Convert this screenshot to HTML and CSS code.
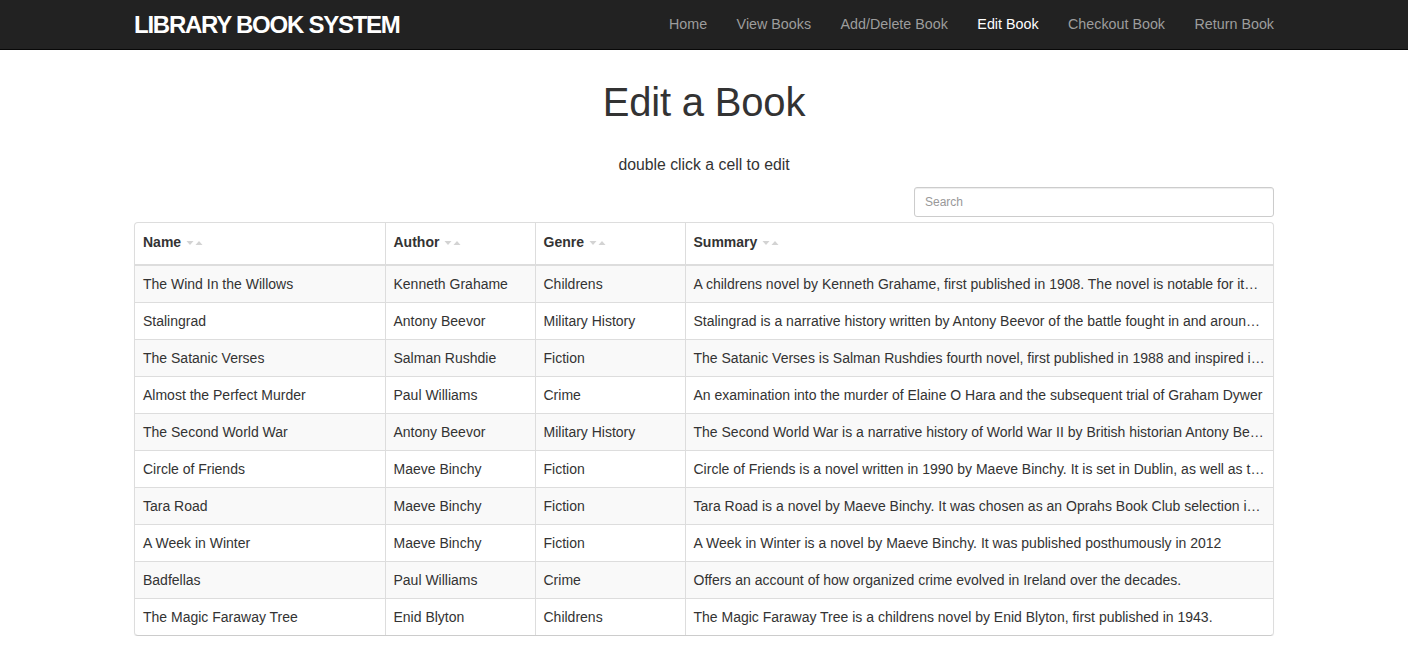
FILE: index.html
```html
<!DOCTYPE html>
<html lang="en">
<head>
<meta charset="utf-8">
<title>Edit a Book</title>
<link rel="stylesheet" href="styles.css">
</head>
<body>
<nav class="navbar">
  <div class="container nav-inner">
    <a class="brand" href="#">LIBRARY BOOK SYSTEM</a>
    <ul class="nav-links">
      <li><a href="#">Home</a></li>
      <li><a href="#">View Books</a></li>
      <li><a href="#">Add/Delete Book</a></li>
      <li><a class="active" href="#">Edit Book</a></li>
      <li><a href="#">Checkout Book</a></li>
      <li><a href="#">Return Book</a></li>
    </ul>
  </div>
</nav>
<main class="container">
  <h1 class="title">Edit a Book</h1>
  <p class="hint">double click a cell to edit</p>
  <div class="toolbar">
    <input class="search" type="text" placeholder="Search">
  </div>
  <div class="table-wrap">
    <table class="books">
      <colgroup>
        <col class="c-name"><col class="c-author"><col class="c-genre"><col class="c-summary">
      </colgroup>
      <thead>
        <tr>
          <th>Name<span class="sort"><svg width="17" height="6" viewBox="0 0 17 6"><path d="M0.5 1h7l-3.5 4z" fill="#d3d3d3"/><path d="M9.5 5h7l-3.5-4z" fill="#d3d3d3"/></svg></span></th>
          <th>Author<span class="sort"><svg width="17" height="6" viewBox="0 0 17 6"><path d="M0.5 1h7l-3.5 4z" fill="#d3d3d3"/><path d="M9.5 5h7l-3.5-4z" fill="#d3d3d3"/></svg></span></th>
          <th>Genre<span class="sort"><svg width="17" height="6" viewBox="0 0 17 6"><path d="M0.5 1h7l-3.5 4z" fill="#d3d3d3"/><path d="M9.5 5h7l-3.5-4z" fill="#d3d3d3"/></svg></span></th>
          <th>Summary<span class="sort"><svg width="17" height="6" viewBox="0 0 17 6"><path d="M0.5 1h7l-3.5 4z" fill="#d3d3d3"/><path d="M9.5 5h7l-3.5-4z" fill="#d3d3d3"/></svg></span></th>
        </tr>
      </thead>
      <tbody>
        <tr><td>The Wind In the Willows</td><td>Kenneth Grahame</td><td>Childrens</td><td>A childrens novel by Kenneth Grahame, first published in 1908. The novel is notable for its mixture of mysticism, adventure, morality, and camaraderie.</td></tr>
        <tr><td>Stalingrad</td><td>Antony Beevor</td><td>Military History</td><td>Stalingrad is a narrative history written by Antony Beevor of the battle fought in and around the city of Stalingrad during World War II.</td></tr>
        <tr><td>The Satanic Verses</td><td>Salman Rushdie</td><td>Fiction</td><td>The Satanic Verses is Salman Rushdies fourth novel, first published in 1988 and inspired in part by the life of Muhammad.</td></tr>
        <tr><td>Almost the Perfect Murder</td><td>Paul Williams</td><td>Crime</td><td>An examination into the murder of Elaine O Hara and the subsequent trial of Graham Dywer</td></tr>
        <tr><td>The Second World War</td><td>Antony Beevor</td><td>Military History</td><td>The Second World War is a narrative history of World War II by British historian Antony Beevor.</td></tr>
        <tr><td>Circle of Friends</td><td>Maeve Binchy</td><td>Fiction</td><td>Circle of Friends is a novel written in 1990 by Maeve Binchy. It is set in Dublin, as well as the fictional town of Knockglen.</td></tr>
        <tr><td>Tara Road</td><td>Maeve Binchy</td><td>Fiction</td><td>Tara Road is a novel by Maeve Binchy. It was chosen as an Oprahs Book Club selection in 1999.</td></tr>
        <tr><td>A Week in Winter</td><td>Maeve Binchy</td><td>Fiction</td><td>A Week in Winter is a novel by Maeve Binchy. It was published posthumously in 2012</td></tr>
        <tr><td>Badfellas</td><td>Paul Williams</td><td>Crime</td><td>Offers an account of how organized crime evolved in Ireland over the decades.</td></tr>
        <tr><td>The Magic Faraway Tree</td><td>Enid Blyton</td><td>Childrens</td><td>The Magic Faraway Tree is a childrens novel by Enid Blyton, first published in 1943.</td></tr>
      </tbody>
    </table>
  </div>
</main>
</body>
</html>
```
FILE: styles.css
```css
* { box-sizing: border-box; }
html, body { margin: 0; padding: 0; }
body {
  font-family: "Liberation Sans", Arial, Helvetica, sans-serif;
  font-size: 14px;
  line-height: 20px;
  color: #333;
  background: #fff;
  padding-right: 8px;
}
.container {
  width: 1140px;
  margin: 0 auto;
}
.navbar {
  background: #222;
  height: 50px;
  border-bottom: 1px solid #080808;
}
.nav-inner {
  display: flex;
  justify-content: space-between;
  align-items: center;
  height: 49px;
}
.brand {
  color: #fff;
  text-decoration: none;
  font-weight: bold;
  font-size: 24px;
  letter-spacing: -1.25px;
  line-height: 48px;
}
.nav-links {
  list-style: none;
  margin: 0 -15px 0 0;
  padding: 0;
  display: flex;
}
.nav-links a {
  display: block;
  padding: 0 15px 0 14.5px;
  line-height: 47px;
  color: #9d9d9d;
  text-decoration: none;
  font-size: 14.3px;
}
.nav-links a.active { color: #fff; }
.title {
  margin: 30px 0 0;
  text-align: center;
  font-size: 40px;
  line-height: 44px;
  font-weight: normal;
  letter-spacing: -0.2px;
  color: #333;
}
.hint {
  margin: 29px 0 0;
  text-align: center;
  font-size: 15.8px;
  line-height: 23px;
}
.toolbar {
  display: flex;
  justify-content: flex-end;
  margin-top: 11px;
}
.search {
  width: 360px;
  height: 30px;
  padding: 5px 10px;
  font-family: inherit;
  font-size: 12px;
  color: #555;
  border: 1px solid #ccc;
  border-radius: 3px;
  box-shadow: inset 0 1px 1px rgba(0,0,0,.075);
  outline: none;
}
.search::placeholder { color: #999; }
.table-wrap {
  margin-top: 5px;
  border: 1px solid #ddd;
  border-bottom-color: #ccc;
  border-radius: 4px;
  overflow: hidden;
  box-shadow: 0 1px 1px rgba(0,0,0,.06);
}
.books {
  width: 100%;
  border-collapse: collapse;
  table-layout: fixed;
}
.c-name { width: 250px; }
.c-author { width: 150px; }
.c-genre { width: 150px; }
.books th {
  text-align: left;
  font-weight: bold;
  padding: 7px 8px 10px;
  line-height: 24px;
  border-bottom: 2px solid #ddd;
  border-left: 1px solid #ddd;
  white-space: nowrap;
}
.books td {
  padding: 8px;
  line-height: 20px;
  border-top: 1px solid #ddd;
  border-left: 1px solid #ddd;
  white-space: nowrap;
  overflow: hidden;
  text-overflow: ellipsis;
}
.books th:first-child, .books td:first-child { border-left: none; }
.books tbody tr:first-child td { border-top: none; }
.books tbody tr:nth-child(odd) td { background: #f9f9f9; }
.sort {
  display: inline-block;
  margin-left: 5px;
  vertical-align: 1px;
}
.sort svg { display: block; }
```
